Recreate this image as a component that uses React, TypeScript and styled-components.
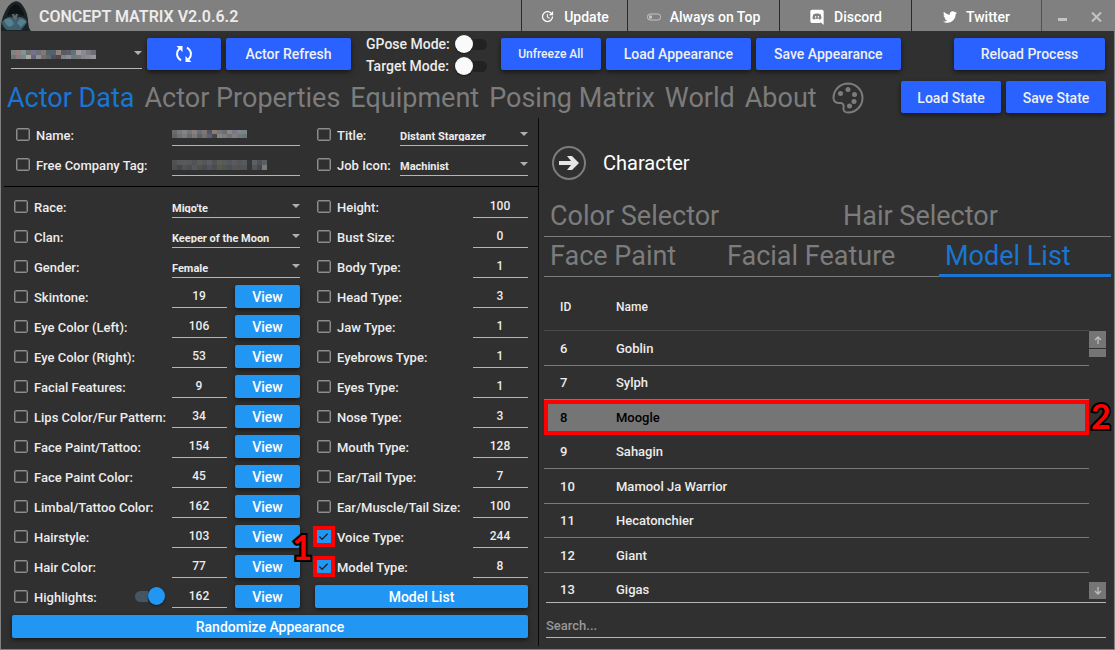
import React from "react";
import styled, { createGlobalStyle, css } from "styled-components";
import { MdUpdate } from "react-icons/md";
import { FaTwitter } from "react-icons/fa";

const GlobalStyle = createGlobalStyle`
  * { box-sizing: border-box; }
  body {
    margin: 0;
    background: #303030;
    color: #ececec;
    font-family: Roboto, "Liberation Sans", sans-serif;
    font-size: 13px;
    font-weight: 500;
  }
  button, input, select { font: inherit; color: inherit; margin: 0; }
`;

const Window = styled.div`
  display: flex;
  flex-direction: column;
  min-height: 100vh;
  border: 1px solid #808080;
  border-top: 0;
  background: #303030;
`;

/* ---------- title bar ---------- */

const TitleBar = styled.header`
  display: flex;
  align-items: stretch;
  height: 31px;
  background: #808080;
`;

const Logo = styled.svg`
  width: 30px;
  height: 30px;
  align-self: flex-end;
`;

const AppTitle = styled.h1`
  flex: 1;
  margin: 0;
  padding-left: 8px;
  font-size: 16px;
  font-weight: 600;
  line-height: 33px;
  white-space: nowrap;
`;

const TitleButton = styled.button<{ $width: number }>`
  display: flex;
  align-items: center;
  justify-content: center;
  gap: 9px;
  width: ${(p) => p.$width}px;
  padding: 2px 0 0;
  border: 0;
  border-left: 1px solid #2a2a2a;
  background: none;
  color: #fff;
  font-size: 14px;
  white-space: nowrap;
  svg { flex: none; }
`;

const WindowControls = styled.div`
  display: flex;
  align-items: center;
  justify-content: space-around;
  width: 73px;
  padding: 2px 1px 0 5px;
  border-left: 1px solid #505050;
`;

const ControlButton = styled.button`
  display: flex;
  padding: 4px;
  border: 0;
  background: none;
  color: #c4c4c4;
`;

/* ---------- shared controls ---------- */

const Button = styled.button<{ $width: number; $small?: boolean }>`
  display: flex;
  align-items: center;
  justify-content: center;
  flex: none;
  width: ${(p) => p.$width}px;
  height: 32px;
  padding: 1px 0 0;
  border: 0;
  border-radius: 2px;
  background: #2962ff;
  color: #f0f0f0;
  font-size: ${(p) => (p.$small ? 12 : 14)}px;
  white-space: nowrap;
  box-shadow: 0 2px 5px rgba(0, 0, 0, 0.55);
`;

const WideButton = styled.button`
  height: 23px;
  padding: 1px 0 0;
  border: 0;
  border-radius: 2px;
  background: #2196f3;
  color: #fff;
  font-size: 14px;
  box-shadow: 0 2px 5px rgba(0, 0, 0, 0.5);
`;

const ViewButton = styled(WideButton)`
  flex: none;
  width: 65px;
  margin-left: 8px;
`;

const FullButton = styled(WideButton)`
  width: 100%;
`;

const Toggle = styled.input.attrs({ type: "checkbox" })`
  appearance: none;
  display: flex;
  align-items: center;
  flex: none;
  width: 32px;
  height: 18px;
  &::before {
    content: "";
    width: 18px;
    height: 18px;
    border-radius: 50%;
    background: #fafafa;
    box-shadow: 0 1px 2px rgba(0, 0, 0, 0.5);
  }
  &::after {
    content: "";
    width: 14px;
    height: 11px;
    border-radius: 0 6px 6px 0;
    background: #222;
  }
  &:checked {
    flex-direction: row-reverse;
    width: 30px;
    margin: 0 7px 3px 0;
  }
  &:checked::before { background: #2196f3; }
  &:checked::after {
    border-radius: 6px 0 0 6px;
    background: #465562;
  }
`;

const Tick = styled.input.attrs({ type: "checkbox" })<{ $marked?: boolean }>`
  appearance: none;
  flex: none;
  width: 14px;
  height: 13px;
  margin: 0 6px 5px 2px;
  border: 1px solid #8c8c8c;
  border-radius: 2px;
  box-shadow: inset 0 0 0 1px #5c5c5c;
  ${(p) =>
    p.$marked &&
    css`
      border-color: #2196f3;
      border-radius: 0;
      box-shadow: none;
      outline: 4px solid #f00;
      background: #2196f3
        url("data:image/svg+xml,%3Csvg xmlns='http://www.w3.org/2000/svg' viewBox='0 0 12 12'%3E%3Cpath d='M1.5 6l3 3 6-6' fill='none' stroke='%23222' stroke-width='1.4'/%3E%3C/svg%3E");
    `}
`;

const SelectBox = styled.div<{ $width: number }>`
  position: relative;
  flex: none;
  width: ${(p) => p.$width}px;
  padding-bottom: 4px;
  border-bottom: 1px solid #b5b5b5;
  &::after {
    content: "";
    position: absolute;
    right: 0;
    bottom: 9px;
    border: 4px solid transparent;
    border-top-color: #b0b0b0;
    border-bottom: 0;
  }
`;

const SelectClip = styled.div`
  height: 12px;
  overflow: hidden;
`;

const Select = styled.select`
  appearance: none;
  display: block;
  width: 100%;
  height: 15px;
  padding: 0;
  border: 0;
  background: none;
  font-size: 11px;
  font-weight: 700;
  line-height: 15px;
`;

const ActorPicker = styled(SelectBox)`
  align-self: flex-start;
  height: 38px;
  padding-top: 12px;
  &::after { bottom: 13px; }
`;

const ActorButton = styled.button`
  display: block;
  width: 100%;
  padding: 0;
  border: 0;
  background: none;
`;

const NumberField = styled.input`
  flex: none;
  width: 55px;
  height: 24px;
  padding: 1px 1px 0 0;
  border: 0;
  border-bottom: 1px solid #b5b5b5;
  background: none;
  font-size: 12px;
  text-align: center;
`;

const TextField = styled.div`
  flex: none;
  width: 128px;
  height: 17px;
  border-bottom: 1px solid #b5b5b5;
`;

/* ---------- toolbar and page tabs ---------- */

const Toolbar = styled.div`
  display: flex;
  align-items: center;
  gap: 5px;
  height: 45px;
  padding: 0 9px 0 10px;
`;

const Modes = styled.div`
  display: grid;
  grid-template-columns: auto auto;
  align-items: center;
  gap: 4px 5px;
  padding: 3px 9px 0 10px;
  font-size: 14px;
  line-height: 18px;
  white-space: nowrap;
`;

const Spacer = styled.div`
  flex: 1;
`;

const PageTabs = styled.nav`
  display: flex;
  align-items: center;
  gap: 10px;
  flex: 1;
  padding-top: 1px;
`;

const PageTab = styled.a<{ $active?: boolean }>`
  color: ${(p) => (p.$active ? "#1976d2" : "#7c7c7c")};
  font-size: 27px;
  font-weight: 400;
  line-height: 36px;
  text-decoration: none;
  white-space: nowrap;
  svg { display: block; margin-left: 5px; }
`;

const TabRow = styled.div`
  display: flex;
  align-items: center;
  gap: 5px;
  height: 42px;
  padding: 0 8px 0 6px;
`;

/* ---------- actor form ---------- */

const Panels = styled.main`
  display: grid;
  grid-template-columns: minmax(0, 538fr) minmax(0, 575fr);
  flex: 1;
  padding-bottom: 3px;
`;

const ActorPanel = styled.section`
  display: flex;
  flex-direction: column;
  border-right: 1px solid #0a0a0a;
`;

const Columns = styled.div<{ $head?: boolean }>`
  display: grid;
  grid-template-columns: minmax(0, 288fr) minmax(0, 213fr);
  column-gap: 15px;
  padding: 0 10px 0 11px;
  ${(p) =>
    p.$head &&
    css`
      grid-template-columns: minmax(0, 286fr) minmax(0, 213fr);
      margin: -2px 0 1px 3px;
      padding: 0 10px 10px;
      border-bottom: 1px solid #000;
    `}
`;

const Row = styled.div`
  display: flex;
  align-items: flex-end;
  height: 30px;
`;

const Label = styled.label`
  flex: 1;
  line-height: 20px;
  white-space: nowrap;
`;

const FormFooter = styled.div`
  display: grid;
  padding: 7px 10px 0 11px;
`;

const Badge = styled.span`
  position: absolute;
  color: #f00;
  font-family: Lato, sans-serif;
  font-size: 34px;
  font-weight: 700;
  line-height: 32px;
  -webkit-text-stroke: 4px #000;
  paint-order: stroke fill;
`;

const TickCell = styled.span`
  position: relative;
  display: flex;
  ${Badge} { right: 25px; bottom: 15px; }
`;

/* ---------- character panel ---------- */

const CharacterPanel = styled.section`
  display: flex;
  flex-direction: column;
  padding: 0 3px 0 5px;
`;

const Heading = styled.div`
  display: flex;
  align-items: center;
  gap: 17px;
  height: 79px;
  padding: 11px 8px 0;
  h2 { margin: 0; font-size: 20px; font-weight: 400; color: #fff; }
`;

const RoundButton = styled.button`
  display: flex;
  align-items: center;
  justify-content: center;
  width: 34px;
  height: 34px;
  padding: 0;
  border: 2px solid #7c7c7c;
  border-radius: 50%;
  background: none;
`;

const SubTabs = styled.div<{ $columns: string }>`
  display: grid;
  grid-template-columns: ${(p) => p.$columns};
`;

const SubTab = styled.button<{ $active?: boolean }>`
  height: 40px;
  padding: 0 6px 2px;
  border: 0;
  background: none;
  box-shadow: inset 0 ${(p) => (p.$active ? "-3px #1976d2" : "-1px #7c7c7c")};
  color: ${(p) => (p.$active ? "#1976d2" : "#7c7c7c")};
  font-size: 27px;
  font-weight: 400;
  line-height: 36px;
  text-align: left;
  white-space: nowrap;
`;

const ListArea = styled.div`
  display: flex;
  height: 326px;
  margin: 0 5px 0 2px;
  border-bottom: 1px solid #b5b5b5;
`;

const TableClip = styled.div`
  position: relative;
  flex: 1;
  min-width: 0;
  margin-left: -2px;
`;

const TableScroll = styled.div`
  height: 325px;
  overflow: hidden;
`;

const ModelTable = styled.table`
  width: 100%;
  border-spacing: 0;
  font-size: 13px;
  text-align: left;
  th { height: 54px; padding: 7px 16px 0; font-size: 12px; font-weight: 500; border-bottom: 1px solid #4a4a4a; }
  th:first-child { width: 56px; padding-right: 0; }
`;

const ModelRow = styled.tr<{ $selected?: boolean }>`
  height: 35px;
  &:nth-child(even) { height: 34px; }
  td { padding: 0 16px; border-bottom: 1px solid #7a7a7a; }
  td:first-child { padding-right: 0; }
  ${(p) =>
    p.$selected &&
    css`
      outline: 4px solid #f00;
      outline-offset: -4px;
      background: #757575;
      color: #000;
    `}
`;

const ListBadge = styled(Badge)`
  left: 100%;
  top: 123px;
  padding-left: 2px;
`;

const Scroller = styled.div`
  display: flex;
  flex-direction: column;
  justify-content: space-between;
  width: 17px;
  padding: 54px 0 3px;
`;

const ScrollButton = styled.button`
  display: flex;
  align-items: center;
  justify-content: center;
  width: 17px;
  height: 17px;
  padding: 0;
  border: 0;
  background: #757575;
  color: #bdbdbd;
`;

const Thumb = styled.div`
  height: 8px;
  margin-top: 1px;
  background: #757575;
`;

const Search = styled.input`
  height: 35px;
  margin: 0 5px 0 2px;
  padding: 10px 0 0;
  border: 0;
  border-bottom: 1px solid #b5b5b5;
  background: none;
  &::placeholder { color: #989898; opacity: 1; }
`;

/* ---------- drawings ---------- */

const MosaicSvg = styled.svg`
  display: block;
`;

function Mosaic({ rows, heights, top = 0 }: { rows: string[]; heights: number[]; top?: number }) {
  const height = top + heights.reduce((a, b) => a + b, 0);
  const shapes: React.ReactNode[] = [];
  let y = top;
  rows.forEach((row, r) => {
    row.split(" ").forEach((color, i) => {
      shapes.push(<rect key={`${r}-${i}`} x={i * 5} y={y} width={5} height={heights[r]} fill={`#${color}`} />);
    });
    y += heights[r];
  });
  return (
    <MosaicSvg width="100" height={height} aria-hidden="true" shapeRendering="crispEdges">
      {shapes}
    </MosaicSvg>
  );
}

const HoodLogo = () => (
  <Logo viewBox="0 0 30 30" aria-hidden="true">
    <path d="M14 0.500C10 1 6 6 3.500 12 1 17 0 22 0 30h30c-2-2-2.500-5-3-10 0-6-3-13-6.500-17-2-2-4-3-6.500-2.500z" fill="#1b2424" />
    <path d="M14 3c-4 2-7 7-8 12l8-3 9 3c0-5-4-11-9-12z" fill="#0e1415" />
    <path d="M1 21c2-3 5-5 9-5l4 2 4-2c4 0 7 2 8 5-1 3-4 5-6 8H6c-3-2-5-5-5-8z" fill="#3f5f6e" />
    <path d="M3 19c3-2 6-2 8 0l2 4-4 3c-3-1-5-4-6-7zM16 22l3-4c3 0 5 1 6 3l-5 5z" fill="#56808f" />
    <path d="M11 13h2l1 2 1-2h2l-1 4-2 2-2-2z" fill="#5c6c71" />
  </Logo>
);

const PinIcon = () => (
  <svg width="14" height="8" viewBox="0 0 14 8" fill="none" stroke="#c4c4c4" aria-hidden="true">
    <rect x="0.500" y="1" width="13" height="6" rx="2.500" />
    <rect x="2.500" y="3" width="2" height="2" />
  </svg>
);

const DiscordIcon = () => (
  <svg width="16" height="16" viewBox="0 0 24 24" fill="#fff" aria-hidden="true">
    <path d="M22,24L16.75,19L17.38,21H4.5A2.5,2.5 0 0,1 2,18.5V3.5A2.5,2.5 0 0,1 4.5,1H19.5A2.5,2.5 0 0,1 22,3.5V24M12,6.8C9.32,6.8 7.44,7.95 7.44,7.95C8.47,7.03 10.27,6.5 10.27,6.5L10.1,6.33C8.41,6.36 6.88,7.53 6.88,7.53C5.16,11.12 5.27,14.22 5.27,14.22C6.67,16.03 8.75,15.9 8.75,15.9L9.46,15C8.21,14.73 7.42,13.62 7.42,13.62C7.42,13.62 9.3,14.9 12,14.9C14.7,14.9 16.58,13.62 16.58,13.62C16.58,13.62 15.79,14.73 14.54,15L15.25,15.9C15.25,15.9 17.33,16.03 18.73,14.22C18.73,14.22 18.84,11.12 17.12,7.53C17.12,7.53 15.59,6.36 13.9,6.33L13.73,6.5C13.73,6.5 15.53,7.03 16.56,7.95C16.56,7.95 14.68,6.8 12,6.8M9.93,10.59C10.58,10.59 11.11,11.16 11.1,11.86C11.1,12.55 10.58,13.13 9.93,13.13C9.29,13.13 8.77,12.55 8.77,11.86C8.77,11.16 9.28,10.59 9.93,10.59M14.1,10.59C14.75,10.59 15.27,11.16 15.27,11.86C15.27,12.55 14.75,13.13 14.1,13.13C13.46,13.13 12.94,12.55 12.94,11.86C12.94,11.16 13.45,10.59 14.1,10.59Z" />
  </svg>
);

const CycleIcon = () => (
  <svg width="18" height="18" viewBox="0 0 18 18" fill="none" stroke="#fff" strokeWidth="2" aria-hidden="true">
    <path d="M4.500 3.500C1 7 1 12 6 15.500M13.500 14.500C17 11 17 6 12 2.500" />
    <path d="M1.500 1h6v6zM16.500 17h-6v-6z" fill="#fff" stroke="none" />
  </svg>
);

const PaletteIcon = () => (
  <svg width="32" height="32" viewBox="0 0 32 32" aria-hidden="true">
    <path
      d="M16 1.500a14.500 14.500 0 0 1 0 29c-3 0-5-1.500-4.500-4.500.500-2.500 0-5-3-5-4 .500-7-1-7-5A14.500 14.500 0 0 1 16 1.500z"
      fill="none"
      stroke="#7c7c7c"
      strokeWidth="2"
    />
    <g fill="#7c7c7c">
      <circle cx="8.500" cy="11.500" r="2.500" />
      <circle cx="16" cy="7.500" r="2.500" />
      <circle cx="22.500" cy="12.500" r="2.500" />
      <circle cx="22" cy="19.500" r="2.500" />
      <circle cx="17.500" cy="24" r="2.500" />
    </g>
  </svg>
);

const ArrowIcon = () => (
  <svg width="20" height="14" viewBox="0 0 20 14" fill="#e6e6e6" aria-hidden="true">
    <path d="M8 0h5l7 7-7 7H8l4-5H0V5h12z" />
  </svg>
);

const ScrollArrow = ({ down }: { down?: boolean }) => (
  <svg width="8" height="8" viewBox="0 0 8 8" fill="none" stroke="currentColor" strokeWidth="1.300" aria-hidden="true">
    <path d={down ? "M4 0v7M1 4l3 3 3-3" : "M4 8V1M1 4l3-3 3 3"} />
  </svg>
);

/* ---------- data ---------- */

type Field = { label: string; value: string; kind?: "select" | "toggle" | "view"; mark?: boolean; badge?: string };

const appearance: Field[] = [
  { label: "Race:", value: "Miqo'te", kind: "select" },
  { label: "Clan:", value: "Keeper of the Moon", kind: "select" },
  { label: "Gender:", value: "Female", kind: "select" },
  { label: "Skintone:", value: "19", kind: "view" },
  { label: "Eye Color (Left):", value: "106", kind: "view" },
  { label: "Eye Color (Right):", value: "53", kind: "view" },
  { label: "Facial Features:", value: "9", kind: "view" },
  { label: "Lips Color/Fur Pattern:", value: "34", kind: "view" },
  { label: "Face Paint/Tattoo:", value: "154", kind: "view" },
  { label: "Face Paint Color:", value: "45", kind: "view" },
  { label: "Limbal/Tattoo Color:", value: "162", kind: "view" },
  { label: "Hairstyle:", value: "103", kind: "view" },
  { label: "Hair Color:", value: "77", kind: "view" },
  { label: "Highlights:", value: "162", kind: "toggle" },
];

const body: Field[] = [
  { label: "Height:", value: "100" },
  { label: "Bust Size:", value: "0" },
  { label: "Body Type:", value: "1" },
  { label: "Head Type:", value: "3" },
  { label: "Jaw Type:", value: "1" },
  { label: "Eyebrows Type:", value: "1" },
  { label: "Eyes Type:", value: "1" },
  { label: "Nose Type:", value: "3" },
  { label: "Mouth Type:", value: "128" },
  { label: "Ear/Tail Type:", value: "7" },
  { label: "Ear/Muscle/Tail Size:", value: "100" },
  { label: "Voice Type:", value: "244", mark: true },
  { label: "Model Type:", value: "8", mark: true, badge: "1" },
];

const models: [number, string][] = [
  [6, "Goblin"],
  [7, "Sylph"],
  [8, "Moogle"],
  [9, "Sahagin"],
  [10, "Mamool Ja Warrior"],
  [11, "Hecatonchier"],
  [12, "Giant"],
  [13, "Gigas"],
];

const pageTabs = ["Actor Data", "Actor Properties", "Equipment", "Posing Matrix", "World", "About"];

/* ---------- composition ---------- */

const Dropdown = ({ value, label }: { value: string; label: string }) => (
  <SelectBox $width={128}>
    <SelectClip>
      <Select aria-label={label}>
        <option>{value}</option>
      </Select>
    </SelectClip>
  </SelectBox>
);

function FormRow({ field, children }: { field: Field; children?: React.ReactNode }) {
  const id = field.label.replace(/\W/g, "");
  return (
    <Row>
      <TickCell>
        <Tick id={id} $marked={field.mark} defaultChecked={field.mark} />
        {field.badge && <Badge>{field.badge}</Badge>}
      </TickCell>
      <Label htmlFor={id}>{field.label}</Label>
      {field.kind === "toggle" && <Toggle aria-label="Highlights on" defaultChecked />}
      {children}
      {!children && field.kind === "select" && <Dropdown value={field.value} label={field.label} />}
      {!children && field.kind !== "select" && <NumberField aria-label={field.label} defaultValue={field.value} />}
      {(field.kind === "view" || field.kind === "toggle") && <ViewButton>View</ViewButton>}
    </Row>
  );
}

export default function App() {
  return (
    <Window>
      <GlobalStyle />
      <TitleBar>
        <HoodLogo />
        <AppTitle>CONCEPT MATRIX V2.0.6.2</AppTitle>
        <TitleButton $width={106}><MdUpdate size={15} />Update</TitleButton>
        <TitleButton $width={152}><PinIcon />Always on Top</TitleButton>
        <TitleButton $width={132}><DiscordIcon />Discord</TitleButton>
        <TitleButton $width={130}><FaTwitter size={14} />Twitter</TitleButton>
        <WindowControls>
          <ControlButton aria-label="Minimize">
            <svg width="10" height="10" viewBox="0 0 10 10"><path d="M0 6h9v3H0z" fill="currentColor" /></svg>
          </ControlButton>
          <ControlButton aria-label="Close">
            <svg width="11" height="10" viewBox="0 0 11 10"><path d="M1 0.500l9 9M10 0.500l-9 9" stroke="currentColor" strokeWidth="2" /></svg>
          </ControlButton>
        </WindowControls>
      </TitleBar>

      <Toolbar>
        <ActorPicker $width={131}>
          <ActorButton aria-label="Actor">
            <Mosaic
              top={7}
              heights={[5, 4]}
              rows={[
                "7d8484 8f8180 7d9595 6f6f74 74728c 6c7078 8b7573 536266 4f6470 90827d 595a64 5d5f68 5f7278 a09a9c 908890 7a7a84 6f6c78",
                "6f7577 857d7e 77898b a8a9a0 66667e 8f8f96 7b6b6b 5c6a70 4a555b 554846 80828a 8a8c90 6d7a80 77797a 85888a 8d8d8e 9a9797",
              ]}
            />
          </ActorButton>
        </ActorPicker>
        <Button $width={74} aria-label="Refresh actor list"><CycleIcon /></Button>
        <Button $width={125}>Actor Refresh</Button>
        <Modes>
          <label htmlFor="gpose">GPose Mode:</label>
          <Toggle id="gpose" />
          <label htmlFor="target">Target Mode:</label>
          <Toggle id="target" />
        </Modes>
        <Button $width={100} $small>Unfreeze All</Button>
        <Button $width={145}>Load Appearance</Button>
        <Button $width={145}>Save Appearance</Button>
        <Spacer />
        <Button $width={151}>Reload Process</Button>
      </Toolbar>

      <TabRow>
        <PageTabs>
          {pageTabs.map((tab, i) => (
            <PageTab key={tab} href="#" $active={i === 0}>{tab}</PageTab>
          ))}
          <PageTab href="#" aria-label="Theme"><PaletteIcon /></PageTab>
        </PageTabs>
        <Button $width={100}>Load State</Button>
        <Button $width={100}>Save State</Button>
      </TabRow>

      <Panels>
        <ActorPanel>
          <Columns $head>
            <div>
              <FormRow field={{ label: "Name:", value: "" }}>
                <TextField>
                  <Mosaic
                    top={1}
                    heights={[4, 4]}
                    rows={[
                      "6c6a6c 7c7877 7c8787 74757c 8c8079 66707a 7d7673 50546a 8e7c74 74787c 6c6e74 8c8684 77788e 848486 74888a",
                      "606366 727274 7b7d7d 686a70 787a7e 5f6166 74706f 5c6070 4b4848 858686 7b7d80 75736f 807f84 73787e 6b7678",
                    ]}
                  />
                </TextField>
              </FormRow>
              <FormRow field={{ label: "Free Company Tag:", value: "" }}>
                <TextField>
                  <Mosaic
                    top={1}
                    heights={[5, 5]}
                    rows={[
                      "4e5254 545a5e 5b5a58 56595c 515356 5b5b58 54575a 5a5c60 4f5358 5c5d54 575a58 50565a 595b5e 5a5554 565a5c 34383b 5d6063 4e5256 5c5f60",
                      "4a5052 42464a 505254 4b4c4c 56575a 4f5150 484b50 52545a 4b4c50 55584a 50554c 4a5052 52545a 55514e 4f5556 33363a 505458 43484c 747c80",
                    ]}
                  />
                </TextField>
              </FormRow>
            </div>
            <div>
              <FormRow field={{ label: "Title:", value: "Distant Stargazer", kind: "select" }} />
              <FormRow field={{ label: "Job Icon:", value: "Machinist", kind: "select" }} />
            </div>
          </Columns>
          <Columns>
            <div>
              {appearance.map((field) => <FormRow key={field.label} field={field} />)}
            </div>
            <div>
              {body.map((field) => <FormRow key={field.label} field={field} />)}
              <Row><FullButton>Model List</FullButton></Row>
            </div>
          </Columns>
          <FormFooter>
            <WideButton>Randomize Appearance</WideButton>
          </FormFooter>
        </ActorPanel>

        <CharacterPanel>
          <Heading>
            <RoundButton aria-label="Collapse"><ArrowIcon /></RoundButton>
            <h2>Character</h2>
          </Heading>
          <SubTabs $columns="293fr 274fr">
            <SubTab>Color Selector</SubTab>
            <SubTab>Hair Selector</SubTab>
          </SubTabs>
          <SubTabs $columns="177fr 218fr 172fr">
            <SubTab>Face Paint</SubTab>
            <SubTab>Facial Feature</SubTab>
            <SubTab $active>Model List</SubTab>
          </SubTabs>
          <ListArea>
            <TableClip>
              <TableScroll>
                <ModelTable>
                  <thead>
                    <tr><th>ID</th><th>Name</th></tr>
                  </thead>
                  <tbody>
                    {models.map(([id, name]) => (
                      <ModelRow key={id} $selected={id === 8}>
                        <td>{id}</td>
                        <td>{name}</td>
                      </ModelRow>
                    ))}
                  </tbody>
                </ModelTable>
              </TableScroll>
              <ListBadge>2</ListBadge>
            </TableClip>
            <Scroller>
              <div>
                <ScrollButton aria-label="Scroll up"><ScrollArrow /></ScrollButton>
                <Thumb />
              </div>
              <ScrollButton aria-label="Scroll down"><ScrollArrow down /></ScrollButton>
            </Scroller>
          </ListArea>
          <Search placeholder="Search..." aria-label="Search" />
        </CharacterPanel>
      </Panels>
    </Window>
  );
}
